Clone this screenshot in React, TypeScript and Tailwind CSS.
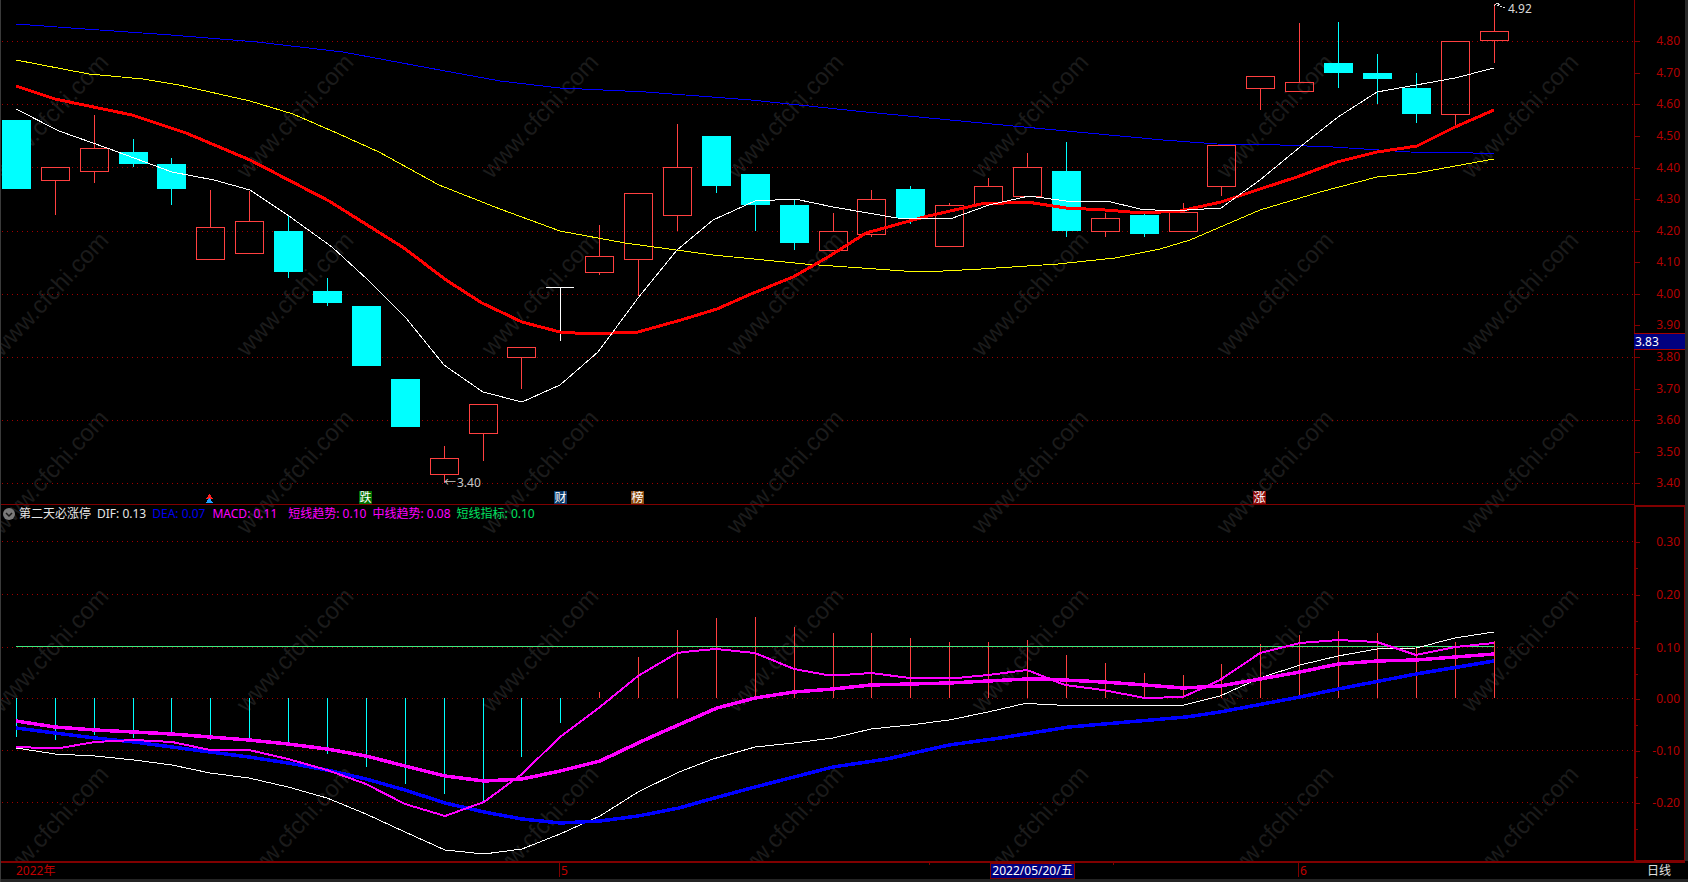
import React from "react";

const CJK = "font-['Noto_Sans','Noto_Sans_CJK_SC',sans-serif]";

// [index, wickTop, bodyTop, bodyBottom, wickBottom, up]
const candles: [number, number, number, number, number, boolean][] = [
  [0, 120, 120, 189, 189, false],
  [1, 167, 167, 181, 215, true],
  [2, 115, 148, 172, 183, true],
  [3, 139, 152, 164, 167, false],
  [4, 158, 164, 189, 205, false],
  [5, 190, 227, 260, 260, true],
  [6, 191, 221, 254, 254, true],
  [7, 216, 231, 272, 278, false],
  [8, 278, 291, 303, 306, false],
  [9, 306, 306, 366, 366, false],
  [10, 379, 379, 427, 427, false],
  [11, 446, 458, 475, 483, true],
  [12, 404, 404, 434, 461, true],
  [13, 347, 347, 358, 389, true],
  [15, 225, 256, 273, 275, true],
  [16, 193, 193, 260, 296, true],
  [17, 124, 167, 216, 231, true],
  [18, 136, 136, 186, 193, false],
  [19, 174, 174, 205, 231, false],
  [20, 200, 205, 243, 250, false],
  [21, 213, 231, 251, 251, true],
  [22, 190, 199, 235, 237, true],
  [23, 186, 189, 218, 224, false],
  [24, 203, 205, 247, 247, true],
  [25, 178, 186, 205, 206, true],
  [26, 153, 167, 197, 197, true],
  [27, 142, 171, 231, 237, false],
  [28, 213, 218, 232, 237, true],
  [29, 214, 215, 234, 237, false],
  [30, 203, 212, 232, 232, true],
  [31, 145, 145, 187, 196, true],
  [32, 76, 76, 89, 110, true],
  [33, 23, 82, 92, 92, true],
  [34, 22, 63, 73, 88, false],
  [35, 54, 73, 79, 104, false],
  [36, 73, 88, 114, 123, false],
  [37, 41, 41, 115, 127, true],
  [38, 4, 31, 41, 63, true],
];

const histTops = [
  738, 741, 736, 739, 735, 741, 740, 745, 755, 768, 785, 795, 803, 758, 724, 693, 658, 631, 619, 618,
  628, 634, 634, 639, 643, 643, 641, 656, 664, 674, 676, 665, 645, 636, 632, 634, 648, 643, 642,
];

const ma5 =
  "16,109 59,131 107,148 172,172 214,180 250,190 289,216 332,247 368,280 406,318 444,365 483,392 522,402 560,385 598,352 638,298 677,250 713,220 755,201 795,199 833,207 897,218 950,219 989,205 1029,196 1066,201 1107,201 1140,209 1170,211 1221,208 1260,180 1300,147 1338,117 1377,92 1416,85 1455,78 1494,68";
const ma10 =
  "16,86 55,99 132,115 186,133 250,160 329,201 404,248 446,280 482,303 522,322 560,332 589,334 638,332 681,320 717,309 751,294 793,277 828,257 866,233 924,217 981,204 1027,202 1066,208 1105,210 1143,213 1180,211 1221,202 1260,189 1297,177 1337,162 1377,152 1417,146 1455,127 1494,110";
const ma20 =
  "16,60 89,74 143,79 179,85 250,101 293,114 339,134 379,152 439,185 500,209 560,231 625,243 713,255 805,264 904,271 943,271 981,269 1058,264 1115,258 1160,249 1190,240 1260,210 1320,192 1377,177 1417,173 1494,159";
const ma60 =
  "16,24 85,29 171,35 257,42 343,52 429,68 500,81 560,88 646,92 751,100 866,112 1013,126 1120,136 1163,140 1217,144 1280,145 1333,147 1410,152 1473,153 1494,154";

const dif =
  "16,749 55,755 95,757 134,761 172,766 210,774 249,779 288,788 327,799 366,815 405,833 445,851 484,855 522,850 560,835 600,817 638,793 679,773 713,760 755,748 794,744 833,739 871,730 910,726 949,721 988,713 1027,704 1037,705 1057,706 1124,706 1184,706 1220,697 1260,679 1300,666 1338,657 1377,650 1416,649 1455,639 1494,633";
const dea =
  "16,729 55,734 95,739 134,743 172,748 210,753 249,758 288,764 327,771 366,780 405,791 445,804 484,813 522,820 560,824 600,822 638,817 679,809 700,803 755,788 833,768 887,760 949,746 1000,739 1069,728 1186,718 1220,713 1300,698 1338,690 1416,675 1494,662";
const midTrend =
  "16,722 55,728 95,731 134,733 172,735 210,738 249,741 288,745 327,750 366,757 405,767 445,777 484,782 522,780 560,772 600,762 638,744 660,734 717,709 755,699 794,693 833,690 871,686 910,685 949,684 988,682 1027,680 1045,680 1103,683 1145,686 1183,689 1220,687 1260,680 1300,673 1338,665 1377,662 1416,661 1455,658 1494,655";
const shortTrend =
  "16,748 45,749 60,749 95,743 134,741 172,743 210,751 249,751 288,760 327,771 366,785 405,805 445,817 484,803 522,775 560,738 600,708 638,677 677,654 693,652 716,650 755,654 794,670 827,676 843,676 871,674 910,679 957,679 988,676 1027,671 1065,686 1103,691 1145,699 1183,698 1220,681 1260,654 1300,644 1338,641 1377,643 1416,656 1455,648 1494,644";

const upperGrid = [41, 104, 167, 231, 294, 357, 420, 483];
const priceLabels = ["4.80", "4.70", "4.60", "4.50", "4.40", "4.30", "4.20", "4.10", "4.00", "3.90", "3.80", "3.70", "3.60", "3.50", "3.40"];
const lowerGrid = [542, 595, 648, 699, 751, 803];
const lowerLabels = ["0.30", "0.20", "0.10", "0.00", "-0.10", "-0.20"];

const candleX = (i: number) => Math.floor(16.4 + 38.89 * i);

function Watermark() {
  const items: [number, number][] = [];
  for (let r = 0; r < 5; r++) {
    for (let k = 0; k < 7; k++) items.push([50 + 245 * k, 116 + 178 * r]);
  }
  return (
    <svg className="absolute inset-0 h-[861px] w-[1688px]" viewBox="0 0 1688 861">
      {items.map(([x, y]) => (
        <text
          key={`${x}-${y}`}
          x={x}
          y={y + 8}
          textAnchor="middle"
          fontSize={24}
          fill="#1b1b1b"
          transform={`rotate(-47 ${x} ${y})`}
          className="font-['Liberation_Sans',sans-serif]"
        >
          www.cfchi.com
        </text>
      ))}
    </svg>
  );
}

function GridLine({ y }: { y: number }) {
  return <line x1={2} x2={1634} y1={y + 0.5} y2={y + 0.5} stroke="#a00000" strokeDasharray="1 4" />;
}

function Candle({ c }: { c: (typeof candles)[number] }) {
  const [i, wickTop, top, bottom, wickBottom, up] = c;
  const x = candleX(i);
  const color = up ? "#ff4040" : "#00ffff";
  return (
    <g>
      {wickTop < top && <line x1={x + 0.5} x2={x + 0.5} y1={wickTop} y2={top} stroke={color} />}
      {wickBottom > bottom && <line x1={x + 0.5} x2={x + 0.5} y1={bottom} y2={wickBottom} stroke={color} />}
      {up ? (
        <rect x={x - 14 + 0.5} y={top + 0.5} width={28} height={bottom - top - 1} fill="none" stroke={color} />
      ) : (
        <rect x={x - 14} y={top} width={29} height={bottom - top} fill={color} />
      )}
    </g>
  );
}

function Line({ points, color, width }: { points: string; color: string; width: number }) {
  return <polyline points={points} fill="none" stroke={color} strokeWidth={width} strokeLinejoin="round" />;
}

function Badge({ className, text }: { className: string; text: string }) {
  return (
    <div
      className={`absolute top-[491px] flex h-[13px] w-[13px] items-center justify-center text-[12px] leading-none text-white ${CJK} ${className}`}
    >
      {text}
    </div>
  );
}

function UpperChart() {
  return (
    <div className="relative h-[505px] border-b border-[#800000]">
      <svg className="block h-[505px] w-[1634px]" viewBox="0 0 1634 505" shapeRendering="crispEdges">
        {upperGrid.map((y) => (
          <GridLine key={y} y={y} />
        ))}
        {candles.map((c) => (
          <Candle key={c[0]} c={c} />
        ))}
        {/* doji on the day after the low */}
        <line x1={546} x2={574} y1={287.5} y2={287.5} stroke="#ffffff" />
        <line x1={560.5} x2={560.5} y1={287} y2={341} stroke="#ffffff" />
        <Line points={ma60} color="#0000ff" width={1} />
        <Line points={ma20} color="#ffff00" width={1} />
        <Line points={ma10} color="#ff0000" width={3} />
        <Line points={ma5} color="#ffffff" width={1} />
        {/* signal arrow */}
        <polygon points="209.5,494 213,499 206,499" fill="#ff2020" />
        <polygon points="209.5,498 213.5,503 205.5,503" fill="#20a0ff" />
        {/* high price leader */}
        <polyline points="1494,6 1497,3 1500,5" fill="none" stroke="#e0e0e0" />
        <line x1={1497} x2={1506} y1={5} y2={8} stroke="#e0e0e0" strokeDasharray="2 1" />
        <g fontSize={12} className={CJK}>
          <text x={444} y={486.5} fill="#c8c8c8">
            ←
          </text>
          <text x={457} y={486.5} fill="#c8c8c8">
            3.40
          </text>
          <text x={1508} y={12.5} fill="#d8d8d8">
            4.92
          </text>
        </g>
      </svg>
      <Badge className="left-[359px] bg-[#007000]" text="跌" />
      <Badge className="left-[554px] bg-[#0a3a6a]" text="财" />
      <Badge className="left-[631px] bg-[#8a4a10]" text="榜" />
      <Badge className="left-[1253px] bg-[#8b0a0a]" text="涨" />
    </div>
  );
}

function LowerChart() {
  return (
    <div className="relative h-[356px]">
      <svg className="block h-[356px] w-[1634px]" viewBox="0 506 1634 356" shapeRendering="crispEdges">
        {lowerGrid.map((y) => (
          <GridLine key={y} y={y} />
        ))}
        {histTops.map((y, i) => {
          const x = candleX(i) + 0.5;
          return <line key={i} x1={x} x2={x} y1={699} y2={y} stroke={i < 15 ? "#00ffff" : "#ff4040"} />;
        })}
        <line x1={16} x2={1494} y1={647.5} y2={647.5} stroke="#40e880" />
        <Line points={dif} color="#ffffff" width={1} />
        <Line points={dea} color="#0000ff" width={3.5} />
        <Line points={shortTrend} color="#ff00ff" width={2} />
        <Line points={midTrend} color="#ff00ff" width={3.5} />
      </svg>
      <div className={`absolute left-[3px] top-px flex h-[15px] items-center text-[12px] leading-none ${CJK}`}>
        <svg className="mr-1 h-3 w-3" viewBox="0 0 12 12">
          <circle cx="6" cy="6" r="6" fill="#7a7a7a" />
          <path d="M3 5 L6 8 L9 5" fill="none" stroke="#1a1a1a" strokeWidth="1.5" />
        </svg>
        <span className="text-[#e6e6e6]">第二天必涨停</span>
        <span className="ml-[6px] text-[#e6e6e6]">DIF: 0.13</span>
        <span className="ml-[6px] text-[#0000f0]">DEA: 0.07</span>
        <span className="ml-[7px] text-[#ff00ff]">MACD: 0.11</span>
        <span className="ml-[11px] text-[#ff00ff]">短线趋势: 0.10</span>
        <span className="ml-[6px] text-[#ff00ff]">中线趋势: 0.08</span>
        <span className="ml-[6px] text-[#00e060]">短线指标: 0.10</span>
      </div>
    </div>
  );
}

function RightAxis() {
  return (
    <div className="relative w-[51px]">
      <svg className="block h-[861px] w-[51px]" viewBox="1634 0 51 861" shapeRendering="crispEdges">
        <line x1={1634.5} x2={1634.5} y1={0} y2={861} stroke="#800000" strokeWidth={1.5} />
        <rect x={1634.5} y={505.5} width={50} height={355} fill="none" stroke="#800000" strokeWidth={2} />
        {priceLabels.map((p, i) => {
          const y = Math.round(41.3 + i * 31.57);
          return (
            <g key={p}>
              <line x1={1635} x2={1640} y1={y + 0.5} y2={y + 0.5} stroke="#800000" />
              <text x={1680} y={y + 3.5} textAnchor="end" fontSize={12} fill="#b40000" className={CJK}>
                {p}
              </text>
            </g>
          );
        })}
        {lowerLabels.map((p, i) => {
          const y = lowerGrid[i];
          return (
            <g key={p}>
              <line x1={1635} x2={1640} y1={y + 0.5} y2={y + 0.5} stroke="#800000" />
              <line x1={1635} x2={1638} y1={y + 26.5} y2={y + 26.5} stroke="#800000" />
              <text x={1680} y={y + 3.5} textAnchor="end" fontSize={12} fill="#b40000" className={CJK}>
                {p}
              </text>
            </g>
          );
        })}
      </svg>
      <div
        className={`absolute left-0 top-[333px] flex h-[17px] w-[51px] items-center border-y border-[#a00000] bg-[#000080] pl-px text-[12px] leading-none text-white ${CJK}`}
      >
        3.83
      </div>
    </div>
  );
}

function TimeAxis() {
  return (
    <svg className="block h-[18px] w-[1688px]" viewBox="0 861 1688 18" shapeRendering="crispEdges">
      <line x1={0} x2={1685} y1={861.5} y2={861.5} stroke="#800000" strokeWidth={2} />
      <line x1={559.5} x2={559.5} y1={862} y2={877} stroke="#800000" />
      <line x1={1298.5} x2={1298.5} y1={862} y2={877} stroke="#800000" />
      <line x1={929.5} x2={929.5} y1={862} y2={865} stroke="#800000" />
      <line x1={1113.5} x2={1113.5} y1={862} y2={865} stroke="#800000" />
      <rect x={990.5} y={863} width={84} height={15} fill="#000080" stroke="#800000" />
      <g fontSize={12} className={CJK}>
        <text x={16} y={874.5} fill="#c00000">
          2022年
        </text>
        <text x={561} y={874.5} fill="#c00000">
          5
        </text>
        <text x={1032.5} y={874.5} textAnchor="middle" fill="#ffffff">
          2022/05/20/五
        </text>
        <text x={1300} y={874.5} fill="#c00000">
          6
        </text>
        <text x={1647} y={874.5} fill="#e0e0e0">
          日线
        </text>
      </g>
    </svg>
  );
}

export default function App() {
  return (
    <div className="relative h-[882px] w-[1688px] overflow-hidden bg-black">
      <Watermark />
      <div className="relative flex h-[882px] flex-col">
        <div className="flex h-[861px]">
          <div className="w-[1634px]">
            <UpperChart />
            <LowerChart />
          </div>
          <RightAxis />
          <div className="w-[3px] bg-[#2a2a2a]" />
        </div>
        <TimeAxis />
        <div className="h-[3px] bg-[#242424]" />
      </div>
      <div className="absolute bottom-0 left-0 top-0 w-px bg-[#3a3a3a]" />
    </div>
  );
}
